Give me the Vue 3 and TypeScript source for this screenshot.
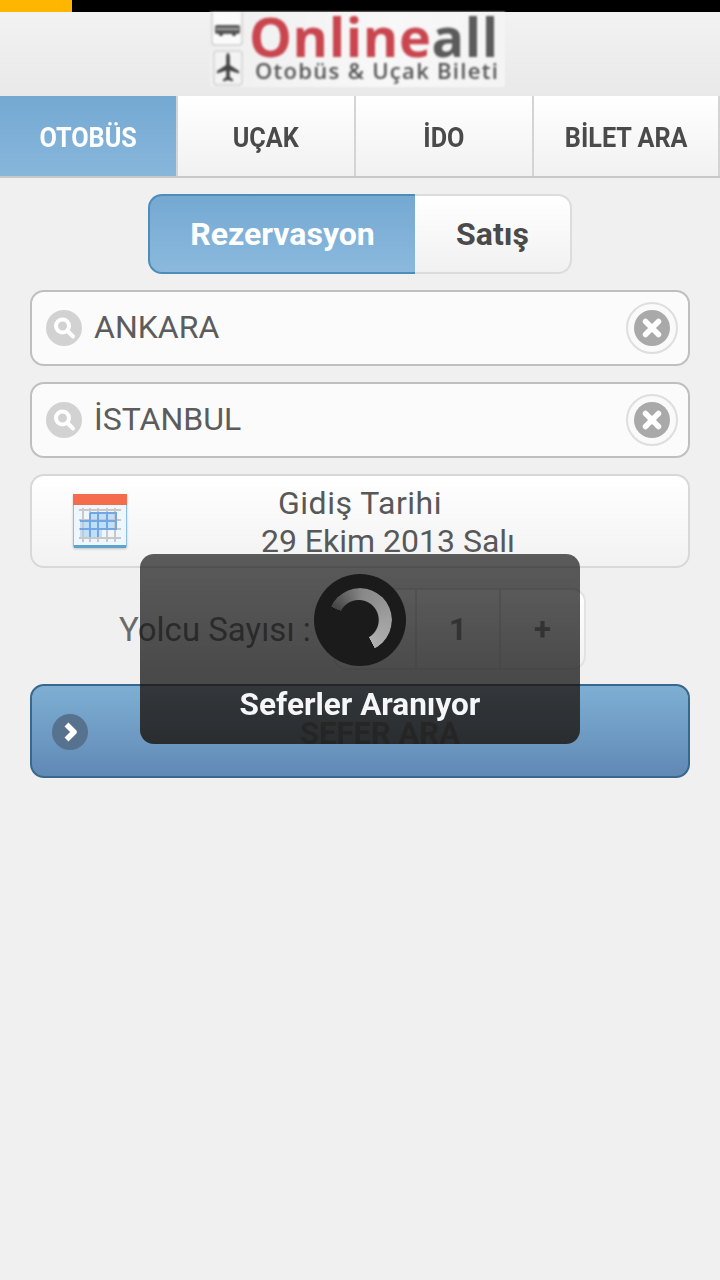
<template>
  <div class="page">
    <div class="status-bar"><div class="status-progress"></div></div>

    <header class="header">
      <div class="logo">
        <div class="logo-icons">
          <svg class="tile-bus" viewBox="0 0 32 34">
            <rect x="1" y="-8" width="30" height="41" rx="3" fill="#fbfbfb" stroke="#cfcfcf" stroke-width="1.5" />
            <rect x="4" y="13" width="25" height="9" rx="2" fill="#5a5a5a" />
            <rect x="5" y="16" width="23" height="2" fill="#a8a8a8" />
            <circle cx="10" cy="22.5" r="1.8" fill="#444" />
            <circle cx="23" cy="22.5" r="1.8" fill="#444" />
          </svg>
          <svg class="tile-plane" viewBox="0 0 30 36">
            <rect x="1" y="1" width="28" height="34" rx="3" fill="#f3f3f3" stroke="#d4d4d4" stroke-width="1.5" />
            <path d="M15 3 C16.2 3 16.8 5 16.8 8 L16.8 15 L26 21 L26 23.5 L16.8 20.5 L16.8 27 L20 29.5 L20 31.5 L15 30 L10 31.5 L10 29.5 L13.2 27 L13.2 20.5 L4 23.5 L4 21 L13.2 15 L13.2 8 C13.2 5 13.8 3 15 3 Z" fill="#444" />
          </svg>
        </div>
        <div class="logo-text">
          <div class="logo-name"><span class="logo-red">Online</span><span class="logo-gray">all</span></div>
          <div class="logo-sub">Otobüs &amp; Uçak Bileti</div>
        </div>
      </div>
    </header>

    <nav class="tabs">
      <div v-for="tab in tabs" :key="tab" :class="['tab', { active: tab === activeTab }]">
        <span class="tab-label">{{ tab }}</span>
      </div>
    </nav>

    <main class="content">
      <div class="segment">
        <div class="seg seg-left">Rezervasyon</div>
        <div class="seg seg-right">Satış</div>
      </div>

      <div v-for="city in cities" :key="city" class="search-field">
        <span class="search-icon">
          <svg viewBox="0 0 36 36" width="36" height="36">
            <circle cx="16.5" cy="16" r="6.5" fill="none" stroke="#fff" stroke-width="4" />
            <path d="M21.5 21 L27 26.5" stroke="#fff" stroke-width="4" stroke-linecap="round" />
          </svg>
        </span>
        <span class="city">{{ city }}</span>
        <span class="clear-btn">
          <span class="clear-inner">
            <svg viewBox="0 0 36 36" width="36" height="36">
              <path d="M11.5 11.5 L24.5 24.5 M24.5 11.5 L11.5 24.5" stroke="#fff" stroke-width="5.5" stroke-linecap="round" />
            </svg>
          </span>
        </span>
      </div>

      <div class="date-field">
        <svg class="calendar" viewBox="0 0 54 54" width="54" height="54">
          <rect x="0.5" y="0.5" width="53" height="53" rx="1.5" fill="#eef7fd" stroke="#8fc0dd" />
          <rect x="1" y="51" width="52" height="3" fill="#5ea3cc" />
          <rect x="0" y="0" width="54" height="11" fill="#f46c4c" />
          <path d="M17 19 H44 V34 H29 V43 H7 V27 H17 Z" fill="#bfe0fb" />
          <g stroke="#c8c8c8" stroke-width="2">
            <path d="M6 16 H48 M6 26 H48 M6 35 H48 M6 44 H48" />
            <path d="M10 14 V48 M17 14 V48 M25 14 V48 M34 14 V48 M42 14 V48" />
          </g>
          <g stroke="#74a6e2" stroke-width="2" fill="none">
            <path d="M17 19 H44 M7 27 H44 M7 35 H44" />
            <path d="M17 19 V43 M25 19 V43 M34 19 V35 M43 19 V35" />
          </g>
        </svg>
        <div class="date-text">
          <div class="date-title">Gidiş Tarihi</div>
          <div class="date-value">29 Ekim 2013 Salı</div>
        </div>
      </div>

      <div class="passenger">
        <span class="passenger-label">Yolcu Sayısı :</span>
        <div class="stepper">
          <div class="step step-minus">-</div>
          <div class="step step-count">1</div>
          <div class="step step-plus">+</div>
        </div>
      </div>

      <div class="search-btn">
        <span class="arrow">
          <svg viewBox="0 0 36 36" width="36" height="36">
            <path d="M14.5 10.5 L22 18 L14.5 25.5" fill="none" stroke="#fff" stroke-width="5.5" stroke-linejoin="round" />
          </svg>
        </span>
        <span class="search-btn-text">SEFER ARA</span>
      </div>
    </main>

    <div class="loader">
      <div class="spinner"><div class="spinner-ring"></div></div>
      <div class="loader-text">Seferler Aranıyor</div>
    </div>
  </div>
</template>

<script setup lang="ts">
const tabs: string[] = ['OTOBÜS', 'UÇAK', 'İDO', 'BİLET ARA'];
const activeTab = 'OTOBÜS';
const cities: string[] = ['ANKARA', 'İSTANBUL'];
</script>

<style>
html,
body {
  margin: 0;
  background: #f0f0f0;
}
</style>

<style scoped>
.page {
  position: relative;
  width: 720px;
  height: 1280px;
  overflow: hidden;
  background: #f0f0f0;
  color: #4a4a4a;
  font-family: Roboto, "Liberation Sans", sans-serif;
}

.status-bar {
  height: 12px;
  background: #000;
}

.status-progress {
  width: 72px;
  height: 12px;
  background: #ffb600;
}

.header {
  height: 84px;
  display: flex;
  justify-content: center;
  background: linear-gradient(#f2f2f2, #e9e9e9);
}

.logo {
  width: 295px;
  height: 75px;
  margin-right: 5px;
  display: flex;
  background: linear-gradient(100deg, #efefef, #f8f8f8 60%, #f4f4f4);
  filter: blur(0.8px);
}

.logo-icons {
  width: 36px;
  flex: none;
  display: flex;
  flex-direction: column;
  gap: 4px;
}

.tile-bus {
  width: 32px;
  height: 34px;
  flex: none;
  margin-left: 1px;
}

.tile-plane {
  width: 30px;
  height: 36px;
  flex: none;
  margin-left: 3px;
}

.logo-text {
  margin-left: 3px;
  font-family: "Open Sans", sans-serif;
  font-weight: 700;
  white-space: nowrap;
}

.logo-name {
  margin-top: 1px;
  font-size: 54px;
  line-height: 46px;
  letter-spacing: 0.6px;
}

.logo-red {
  color: #c9464f;
}

.logo-gray {
  color: #5b5b5b;
}

.logo-sub {
  margin-left: 6px;
  font-size: 22px;
  font-weight: 600;
  line-height: 22px;
  letter-spacing: 1.3px;
  color: #555;
}

.tabs {
  display: flex;
  height: 80px;
  border-bottom: 2px solid #c8c8c8;
}

.tab {
  flex: 0 0 178px;
  box-sizing: border-box;
  padding-top: 3px;
  display: flex;
  align-items: center;
  justify-content: center;
  font-size: 28px;
  font-weight: 700;
  background: linear-gradient(#fff, #f1f1f1);
  border-right: 2px solid #d4d4d4;
}

.tab:last-child {
  flex: 1;
}

.tab.active {
  color: #fff;
  background: linear-gradient(#75a9d2, #87b6db);
}

.tab-label {
  transform: scaleX(0.9);
  white-space: nowrap;
}

.content {
  padding: 16px 30px 0;
  display: flex;
  flex-direction: column;
}

.segment {
  display: flex;
  justify-content: center;
  height: 80px;
}

.seg {
  display: flex;
  align-items: center;
  justify-content: center;
  box-sizing: border-box;
  font-size: 32px;
  font-weight: 700;
}

.seg-left {
  width: 267px;
  color: #fff;
  background: linear-gradient(#75a9d2, #8bb9dd);
  border: 2px solid #4f8db9;
  border-right: none;
  border-radius: 14px 0 0 14px;
}

.seg-right {
  width: 157px;
  background: linear-gradient(#fff, #f1f1f1);
  border: 2px solid #dcdcdc;
  border-left: none;
  border-radius: 0 14px 14px 0;
}

.search-field {
  box-sizing: border-box;
  height: 76px;
  margin-top: 16px;
  padding: 0 10px 0 14px;
  display: flex;
  align-items: center;
  background: #fbfbfb;
  border: 2px solid #bfbfbf;
  border-radius: 14px;
}

.search-icon {
  width: 36px;
  height: 36px;
  flex: none;
  border-radius: 50%;
  background: #d2d2d2;
}

.city {
  flex: 1;
  margin-left: 12px;
  margin-top: -2px;
  font-size: 32px;
  color: #5c5c5c;
}

.clear-btn {
  box-sizing: border-box;
  width: 52px;
  height: 52px;
  flex: none;
  display: flex;
  align-items: center;
  justify-content: center;
  border: 2px solid #dedede;
  border-radius: 50%;
  background: #fafafa;
}

.clear-inner {
  width: 36px;
  height: 36px;
  border-radius: 50%;
  background: #a9a9a9;
}

.date-field {
  position: relative;
  box-sizing: border-box;
  height: 94px;
  margin-top: 16px;
  padding-left: 41px;
  display: flex;
  align-items: center;
  background: linear-gradient(#fff, #f2f2f2);
  border: 2px solid #d8d8d8;
  border-radius: 14px;
}

.calendar {
  flex: none;
  filter: drop-shadow(0 1px 1px rgba(0, 0, 0, 0.2)) blur(0.4px);
}

.date-text {
  position: absolute;
  left: 0;
  right: 0;
  top: 8px;
  text-align: center;
  font-size: 32px;
  line-height: 38px;
  color: #585858;
}

.date-title {
  letter-spacing: 0.5px;
}

.date-value {
  padding-left: 56px;
}

.passenger {
  height: 82px;
  margin-top: 20px;
  display: flex;
  align-items: center;
  padding-left: 89px;
}

.passenger-label {
  width: 214px;
  flex: none;
  font-size: 33px;
  color: #6a6a6a;
  white-space: nowrap;
}

.stepper {
  display: flex;
  height: 82px;
  box-sizing: border-box;
  border: 2px solid #e2e2e2;
  border-radius: 14px;
  background: linear-gradient(#fff, #f1f1f1);
}

.step {
  display: flex;
  align-items: center;
  justify-content: center;
  font-weight: 700;
  font-size: 31px;
  color: #888;
}

.step-minus {
  width: 80px;
  border-right: 2px solid #e2e2e2;
}

.step-count {
  width: 82px;
  border-right: 2px solid #e2e2e2;
}

.step-plus {
  width: 83px;
}

.search-btn {
  position: relative;
  box-sizing: border-box;
  height: 94px;
  margin-top: 14px;
  padding: 4px 0 0 40px;
  display: flex;
  align-items: center;
  justify-content: center;
  background: linear-gradient(#7eafd3, #6089b5);
  border: 2px solid #38688c;
  border-radius: 14px;
}

.arrow {
  position: absolute;
  left: 20px;
  top: 28px;
  width: 36px;
  height: 36px;
  border-radius: 50%;
  background: #56728f;
}

.search-btn-text {
  font-size: 31px;
  font-weight: 700;
  color: #6a6a6a;
}

.loader {
  position: absolute;
  left: 140px;
  top: 554px;
  width: 440px;
  height: 190px;
  border-radius: 14px;
  background: linear-gradient(rgba(18, 18, 18, 0.68), rgba(18, 18, 18, 0.79));
  backdrop-filter: saturate(0.35);
  display: flex;
  flex-direction: column;
  align-items: center;
}

.spinner {
  position: relative;
  width: 92px;
  height: 92px;
  margin-top: 20px;
  border-radius: 50%;
  background: #1b1b1b;
}

.spinner-ring {
  position: absolute;
  inset: 14px;
  border-radius: 50%;
  background: conic-gradient(from -65deg, #444 0deg, #888 70deg, #b0b0b0 217deg, transparent 218deg);
  -webkit-mask: radial-gradient(circle at 48% 50%, transparent 19.5px, #000 20.5px);
  mask: radial-gradient(circle at 48% 50%, transparent 19.5px, #000 20.5px);
}

.loader-text {
  margin-top: 20px;
  font-size: 31.5px;
  font-weight: 700;
  line-height: 38px;
  color: #f4f6f8;
}
</style>
